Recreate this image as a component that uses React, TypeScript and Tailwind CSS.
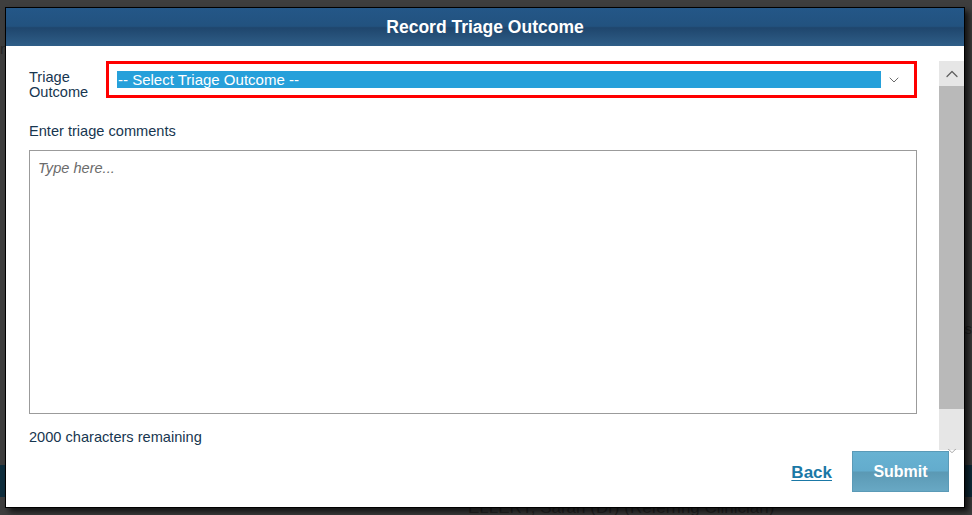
import { ChevronDown, ChevronUp } from "lucide-react"

const font = { fontFamily: '"Liberation Sans", Arial, sans-serif' }

function PageBehind() {
    return (
        <div className="w-[972px] h-[515px] bg-[#3e3e3e] flex flex-col text-[#262626]" style={font}>
            <div className="h-[40px]" />
            <div className="h-[18px] text-[15px] leading-[18px]">n</div>
            <div className="flex-1 flex justify-end items-start pt-[262px]">
                <span className="text-[15px] leading-[18px]">s</span>
            </div>
            <div className="h-[32px] bg-[#0f2e3d]" />
            <div className="h-[18px] pl-[468px] text-[17px] leading-[22px]">ELLERY, Sarah (Dr) (Referring Clinician)</div>
        </div>
    )
}

function Scrollbar() {
    return (
        <div className="w-[25px] flex flex-col bg-[#e6e6e6]">
            <div className="h-[25px] flex items-center justify-center text-[#606060]">
                <ChevronUp size={20} strokeWidth={1.5} />
            </div>
            <div className="h-[323px] bg-[#b9b9b9]" />
            <div className="flex-1 flex items-end justify-center text-[#8a8a8a]">
                <ChevronDown size={14} strokeWidth={1.3} className="-mb-[8px]" />
            </div>
        </div>
    )
}

function TriageForm() {
    return (
        <div className="flex-1 pl-[23px] pr-[22px] flex flex-col text-[14.6px] text-[#173650]">
            <div className="flex h-[37px]">
                <div className="w-[77px] pt-[9px] leading-[15px]">Triage<br />Outcome</div>
                <div className="flex-1 h-[37px] border-[3px] border-[#ff0000] flex items-center pl-[8px] pr-[12px]">
                    <div className="flex-1 h-[17px] bg-[#26a0da] text-white text-[15px] leading-[17px] pl-[1px]">-- Select Triage Outcome --</div>
                    <ChevronDown size={16} strokeWidth={1.3} className="ml-[5px] text-[#555]" />
                </div>
            </div>
            <div className="mt-[25px] leading-[16px]">Enter triage comments</div>
            <div className="mt-[11px] h-[264px] border border-[#9b9b9b] px-[8px] pt-[9px] italic text-[#6b6b6b] leading-[16px]">
                Type here...
            </div>
            <div className="mt-[15px] leading-[16px]">2000 characters remaining</div>
        </div>
    )
}

export default function App() {
    return (
        <div className="relative w-[972px] h-[515px] overflow-hidden">
            <PageBehind />
            <div
                className="absolute left-[5px] top-[7px] w-[960px] h-[501px] border border-black bg-white flex flex-col shadow-[4px_4px_6px_rgba(0,0,0,0.7)]"
                style={font}
            >
                <div className="h-[38px] pt-[1px] flex items-center justify-center bg-[linear-gradient(to_bottom,#245788_0%,#22527f_48%,#1f466d_52%,#2f5e88_100%)] text-white font-bold text-[17.5px]">
                    Record Triage Outcome
                </div>
                <div className="flex h-[404px] pt-[15px]">
                    <TriageForm />
                    <Scrollbar />
                </div>
                <div className="flex-1 flex items-start justify-end pt-[1px] pr-[15px] gap-[20px]">
                    <a href="#" className="mt-[9px] font-bold text-[17px] text-[#1a78a6] underline underline-offset-2">Back</a>
                    <button className="w-[97px] h-[41px] border border-[#5a9ab7] bg-[linear-gradient(to_bottom,#68b2d2_0%,#63accd_48%,#5b99b4_52%,#68a8c4_100%)] text-white font-bold text-[16px]">
                        Submit
                    </button>
                </div>
            </div>
        </div>
    )
}
